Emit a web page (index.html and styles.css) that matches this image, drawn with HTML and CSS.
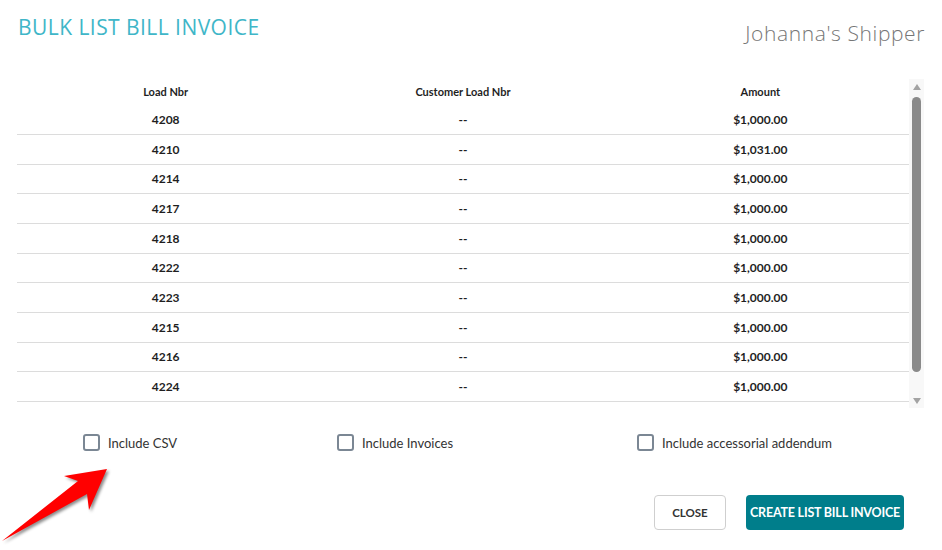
FILE: index.html
```html
<!DOCTYPE html>
<html lang="en">
<head>
<meta charset="utf-8">
<title>Bulk List Bill Invoice</title>
<link rel="stylesheet" href="styles.css">
</head>
<body>
<div class="modal">
  <header class="head">
    <h1 class="title">BULK LIST BILL INVOICE</h1>
    <div class="company">Johanna's Shipper</div>
  </header>

  <div class="grid-wrap">
    <div class="table">
      <div class="row head-row"><div>Load Nbr</div><div>Customer Load Nbr</div><div>Amount</div></div>
      <div class="row"><div>4208</div><div>--</div><div>$1,000.00</div></div>
      <div class="row"><div>4210</div><div>--</div><div>$1,031.00</div></div>
      <div class="row"><div>4214</div><div>--</div><div>$1,000.00</div></div>
      <div class="row"><div>4217</div><div>--</div><div>$1,000.00</div></div>
      <div class="row"><div>4218</div><div>--</div><div>$1,000.00</div></div>
      <div class="row"><div>4222</div><div>--</div><div>$1,000.00</div></div>
      <div class="row"><div>4223</div><div>--</div><div>$1,000.00</div></div>
      <div class="row"><div>4215</div><div>--</div><div>$1,000.00</div></div>
      <div class="row"><div>4216</div><div>--</div><div>$1,000.00</div></div>
      <div class="row"><div>4224</div><div>--</div><div>$1,000.00</div></div>
    </div>
    <div class="scrollbar">
      <span class="sb-btn"><span class="tri-up"></span></span>
      <span class="sb-thumb"></span>
      <span class="sb-space"></span>
      <span class="sb-btn"><span class="tri-down"></span></span>
    </div>
  </div>

  <div class="options">
    <label class="opt"><span class="box"></span>Include CSV</label>
    <label class="opt"><span class="box"></span>Include Invoices</label>
    <label class="opt"><span class="box"></span>Include accessorial addendum</label>
  </div>

  <div class="actions">
    <button class="btn btn-close">CLOSE</button>
    <button class="btn btn-primary">CREATE LIST BILL INVOICE</button>
  </div>

  <svg class="arrow" width="120" height="90" viewBox="0 460 120 90" aria-hidden="true">
    <polygon points="107,469 64,476 78,481 2,541 87,494 89,510" fill="#ff0000"/>
  </svg>
</div>
</body>
</html>
```

FILE: styles.css
```css
* { box-sizing: border-box; }

html, body {
  margin: 0;
  padding: 0;
  background: #ffffff;
}

body {
  font-family: Lato, "Liberation Sans", Arial, sans-serif;
  color: #222;
  width: 942px;
  height: 550px;
  overflow: hidden;
}

.modal {
  position: relative;
  height: 550px;
}

.head {
  display: flex;
  justify-content: space-between;
  align-items: flex-start;
  padding: 14px 18px 0 18px;
  height: 79px;
}

.title {
  margin: 0;
  font-family: "Open Sans", "Liberation Sans", sans-serif;
  font-weight: 400;
  font-size: 21px;
  line-height: 26px;
  color: #3fb6c8;
  letter-spacing: 0.45px;
}

.company {
  font-family: "Open Sans", "Liberation Sans", sans-serif;
  font-weight: 300;
  font-size: 21px;
  line-height: 26px;
  color: #767676;
  letter-spacing: 0.6px;
  margin-top: 6px;
  margin-right: -1px;
}

.grid-wrap {
  display: flex;
  margin-left: 17px;
  width: 907px;
  height: 329px;
  overflow: hidden;
}

.table {
  width: 892px;
}

.row {
  display: grid;
  grid-template-columns: 1fr 1fr 1fr;
  height: 29.67px;
  border-bottom: 1px solid #dcdcdc;
  align-items: center;
  text-align: center;
  font-size: 12px;
  font-weight: 700;
  color: #1f1f1f;
}

.head-row {
  height: 26.3px;
  border-bottom: none;
  font-size: 11px;
  padding-bottom: 2px;
}

.scrollbar {
  width: 15px;
  flex: none;
  background: #f8f8f8;
  display: flex;
  flex-direction: column;
  align-items: center;
}

.sb-btn {
  height: 15px;
  width: 15px;
  display: flex;
  align-items: center;
  justify-content: center;
  flex: none;
}

.tri-up {
  width: 0;
  height: 0;
  border-left: 4.5px solid transparent;
  border-right: 4.5px solid transparent;
  border-bottom: 6px solid #a3a3a3;
}

.tri-down {
  width: 0;
  height: 0;
  border-left: 4.5px solid transparent;
  border-right: 4.5px solid transparent;
  border-top: 6px solid #a3a3a3;
}

.sb-thumb {
  width: 9px;
  height: 275px;
  margin-top: 3px;
  background: #8a8a8a;
  border-radius: 5px;
  flex: none;
}

.sb-space {
  flex: 1;
}

.options {
  display: grid;
  grid-template-columns: 254px 300px auto;
  padding-left: 83px;
  margin-top: 26px;
  height: 17px;
}

.opt {
  display: flex;
  align-items: center;
  font-size: 13px;
  color: #333;
}

.box {
  width: 17px;
  height: 17px;
  border: 2px solid #7b8794;
  border-radius: 3px;
  margin-right: 8px;
  flex: none;
  background: #fff;
}

.actions {
  display: flex;
  justify-content: flex-end;
  gap: 20px;
  padding-right: 38px;
  margin-top: 44px;
}

.btn {
  font-family: Lato, "Liberation Sans", sans-serif;
  font-weight: 700;
  height: 35px;
  border-radius: 4px;
  cursor: pointer;
  padding: 0;
}

.btn-close {
  width: 72px;
  font-size: 11.5px;
  background: #fff;
  border: 1px solid #cfcfcf;
  color: #333;
}

.btn-primary {
  width: 158px;
  font-size: 12.5px;
  background: #007e8b;
  border: none;
  color: #fff;
  letter-spacing: -0.2px;
  white-space: nowrap;
}

.arrow {
  position: absolute;
  left: 0;
  top: 460px;
  filter: drop-shadow(2px 2px 1.5px rgba(0, 0, 0, 0.45));
}
```
